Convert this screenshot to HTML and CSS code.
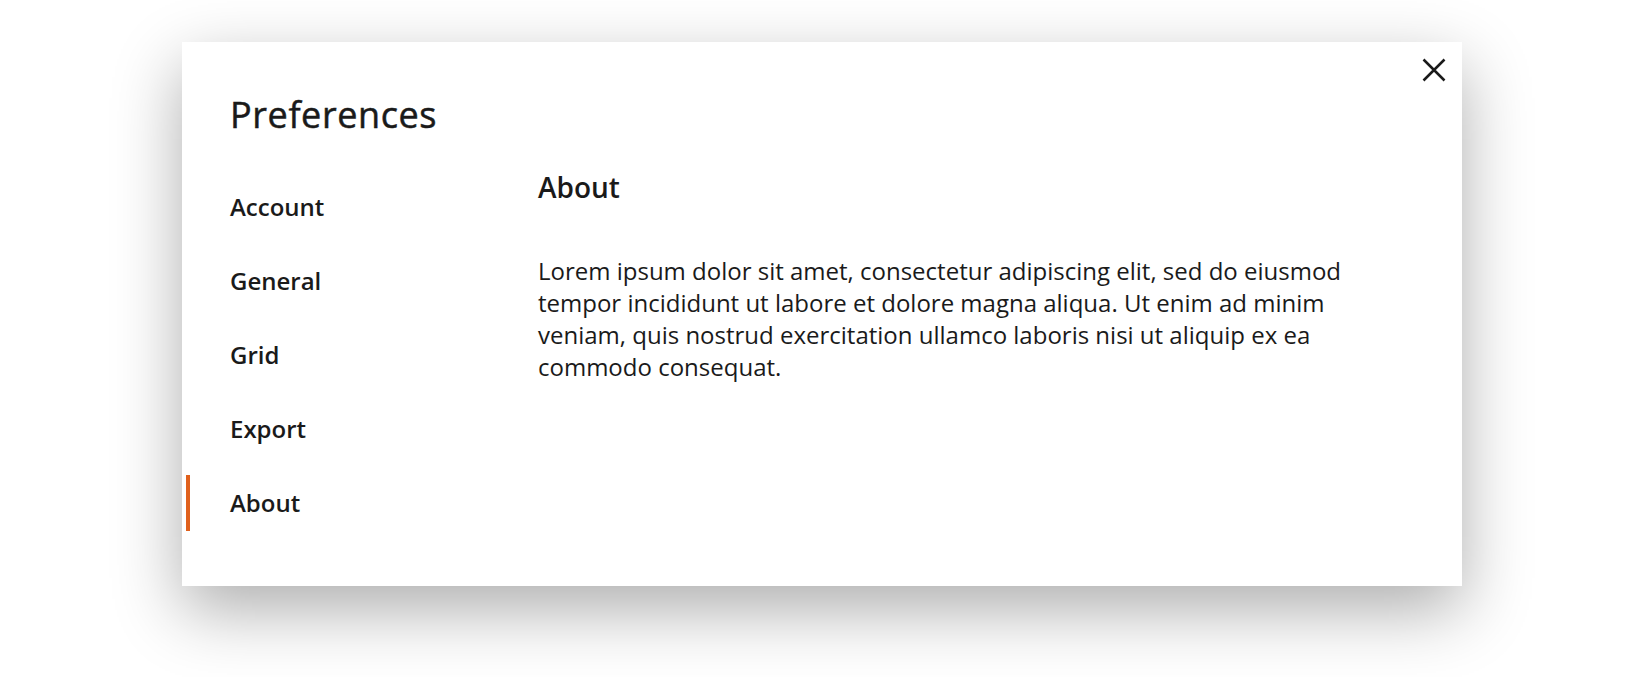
FILE: index.html
```html
<!DOCTYPE html>
<html lang="en">
<head>
<meta charset="utf-8">
<title>Preferences</title>
<link rel="stylesheet" href="styles.css">
</head>
<body>
<div class="page">
  <div class="dialog">
    <button class="close" aria-label="Close">
      <svg width="32" height="32" viewBox="0 0 32 32"><path d="M5.5 5.5 L26.5 26.5 M26.5 5.5 L5.5 26.5" stroke="#1a1a1a" stroke-width="2.5" fill="none"/></svg>
    </button>
    <h1 class="title">Preferences</h1>
    <div class="body">
      <nav class="nav">
        <div class="nav-item">Account</div>
        <div class="nav-item">General</div>
        <div class="nav-item">Grid</div>
        <div class="nav-item">Export</div>
        <div class="nav-item active">About</div>
      </nav>
      <section class="content">
        <h2 class="heading">About</h2>
        <p class="text">Lorem ipsum dolor sit amet, consectetur adipiscing elit, sed do eiusmod tempor incididunt ut labore et dolore magna aliqua. Ut enim ad minim veniam, quis nostrud exercitation ullamco laboris nisi ut aliquip ex ea commodo consequat.</p>
      </section>
    </div>
  </div>
</div>
</body>
</html>
```
FILE: styles.css
```css
html, body {
  margin: 0;
  padding: 0;
  background: #ffffff;
}
body {
  font-family: "Open Sans", "Noto Sans", sans-serif;
  color: #1a1a1a;
}
.page {
  min-height: 677px;
  padding-top: 42px;
  padding-left: 182px;
  box-sizing: border-box;
}
.dialog {
  position: relative;
  box-sizing: border-box;
  width: 1280px;
  height: 544px;
  background: #ffffff;
  box-shadow: 0 24px 64px rgba(0, 0, 0, 0.32);
  padding: 49px 84px 0 4px;
}
.close {
  position: absolute;
  top: 12px;
  right: 12.5px;
  width: 32px;
  height: 32px;
  padding: 0;
  border: 0;
  background: transparent;
  cursor: pointer;
}
.close svg { display: block; }
.title {
  margin: 0 0 0 44px;
  font-size: 36px;
  line-height: 48px;
  font-weight: 400;
  letter-spacing: 0.6px;
  -webkit-text-stroke: 0.5px #1a1a1a;
}
.body {
  display: flex;
  margin-top: 30px;
}
.nav {
  width: 352px;
  display: flex;
  flex-direction: column;
  gap: 18px;
  padding-top: 10px;
}
.nav-item {
  height: 56px;
  line-height: 56px;
  padding-left: 40px;
  font-size: 24px;
  font-weight: 600;
  border-left: 4px solid transparent;
}
.nav-item.active {
  border-left-color: #e0601c;
}
.content {
  flex: 1;
}
.heading {
  margin: 0;
  font-size: 28px;
  line-height: 36px;
  font-weight: 600;
}
.text {
  margin: 50px 0 0;
  font-size: 24px;
  line-height: 32px;
  font-weight: 400;
}
```
